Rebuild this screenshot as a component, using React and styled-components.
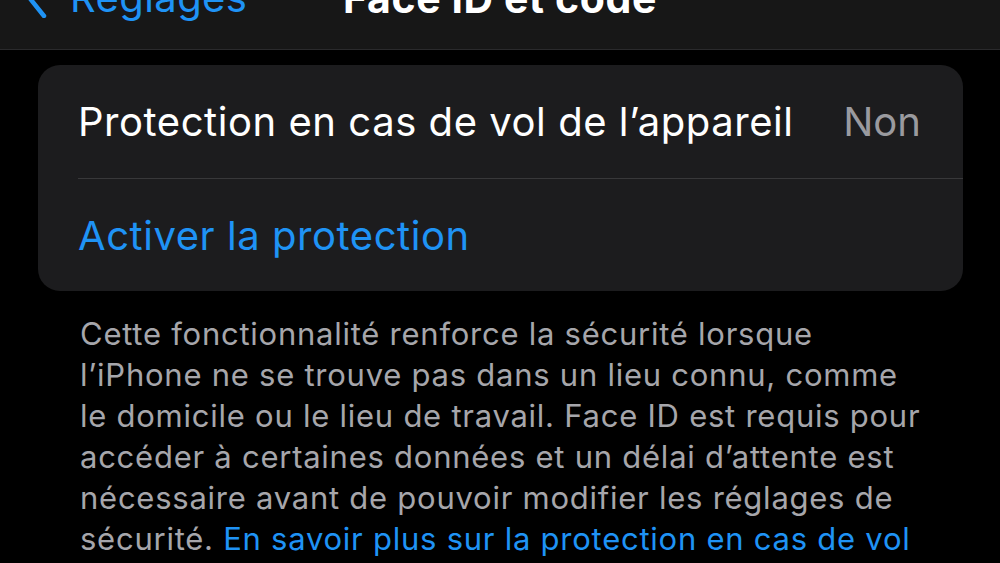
import React from 'react';
import styled, { createGlobalStyle } from 'styled-components';

const GlobalStyle = createGlobalStyle`
    html, body {
        margin: 0;
        padding: 0;
        background: #000;
    }
    body {
        font-family: Inter, "Noto Sans", "Liberation Sans", sans-serif;
        -webkit-font-smoothing: antialiased;
    }
`;

const Screen = styled.div`
    width: 1000px;
    height: 563px;
    overflow: hidden;
    background: #000;
    display: flex;
    flex-direction: column;
`;

// nav bar is scrolled mostly out of view, only its lower part shows
const NavBar = styled.div`
    height: 50px;
    flex-shrink: 0;
    box-sizing: border-box;
    background: #171717;
    border-bottom: 1px solid #2a2a2c;
    overflow: hidden;
`;

const NavRow = styled.div`
    margin-top: -26px;
    display: grid;
    grid-template-columns: 1fr auto 1fr;
    align-items: end;
`;

const BackButton = styled.div`
    display: flex;
    align-items: flex-end;
    gap: 22px;
    padding-left: 24px;
    color: #1f93f5;
    font-size: 40px;
    line-height: 40px;
    letter-spacing: 0.4px;
    white-space: nowrap;
`;

const Chevron = styled.svg`
    width: 24px;
    height: 44px;
    flex-shrink: 0;
`;

const Title = styled.div`
    color: #fff;
    font-size: 41px;
    line-height: 40px;
    font-weight: 700;
    letter-spacing: 0.6px;
    white-space: nowrap;
`;

const Content = styled.div`
    padding: 15px 37px 0 38px;
`;

const Card = styled.div`
    background: #1c1c1e;
    border-radius: 22px;
    overflow: hidden;
`;

const Row = styled.div`
    display: flex;
    align-items: center;
    justify-content: space-between;
    height: ${p => p.$h}px;
    margin-left: 40px;
    padding-right: 42px;
    border-bottom: ${p => (p.$divider ? '1px solid #38383a' : 'none')};
    font-size: 40px;
    color: ${p => (p.$accent ? '#1f93f5' : '#fff')};
    letter-spacing: 0.55px;
    white-space: nowrap;
`;

const Value = styled.span`
    color: #9a9a9f;
    letter-spacing: 0;
`;

const Footer = styled.p`
    margin: 22px 0 0 42px;
    font-size: 31px;
    line-height: 41px;
    color: #a6a6ab;
    font-weight: 400;
    letter-spacing: 0.75px;
    white-space: nowrap;
`;

const Link = styled.span`
    color: #1f93f5;
`;

export default function App() {
    return (
        <Screen>
            <GlobalStyle />
            <NavBar>
                <NavRow>
                    <BackButton>
                        <Chevron viewBox="0 0 24 44">
                            <polyline points="20,2 4,22 20,42" fill="none" stroke="#1f93f5" strokeWidth="4.5" strokeLinecap="round" strokeLinejoin="round" />
                        </Chevron>
                        Réglages
                    </BackButton>
                    <Title>Face ID et code</Title>
                    <div />
                </NavRow>
            </NavBar>
            <Content>
                <Card>
                    <Row $h={113} $divider>
                        Protection en cas de vol de l’appareil
                        <Value>Non</Value>
                    </Row>
                    <Row $h={112} $accent>
                        Activer la protection
                    </Row>
                </Card>
                <Footer>
                    Cette fonctionnalité renforce la sécurité lorsque<br />
                    l’iPhone ne se trouve pas dans un lieu connu, comme<br />
                    le domicile ou le lieu de travail. Face ID est requis pour<br />
                    accéder à certaines données et un délai d’attente est<br />
                    nécessaire avant de pouvoir modifier les réglages de<br />
                    sécurité. <Link>En savoir plus sur la protection en cas de vol</Link>
                </Footer>
            </Content>
        </Screen>
    );
}
